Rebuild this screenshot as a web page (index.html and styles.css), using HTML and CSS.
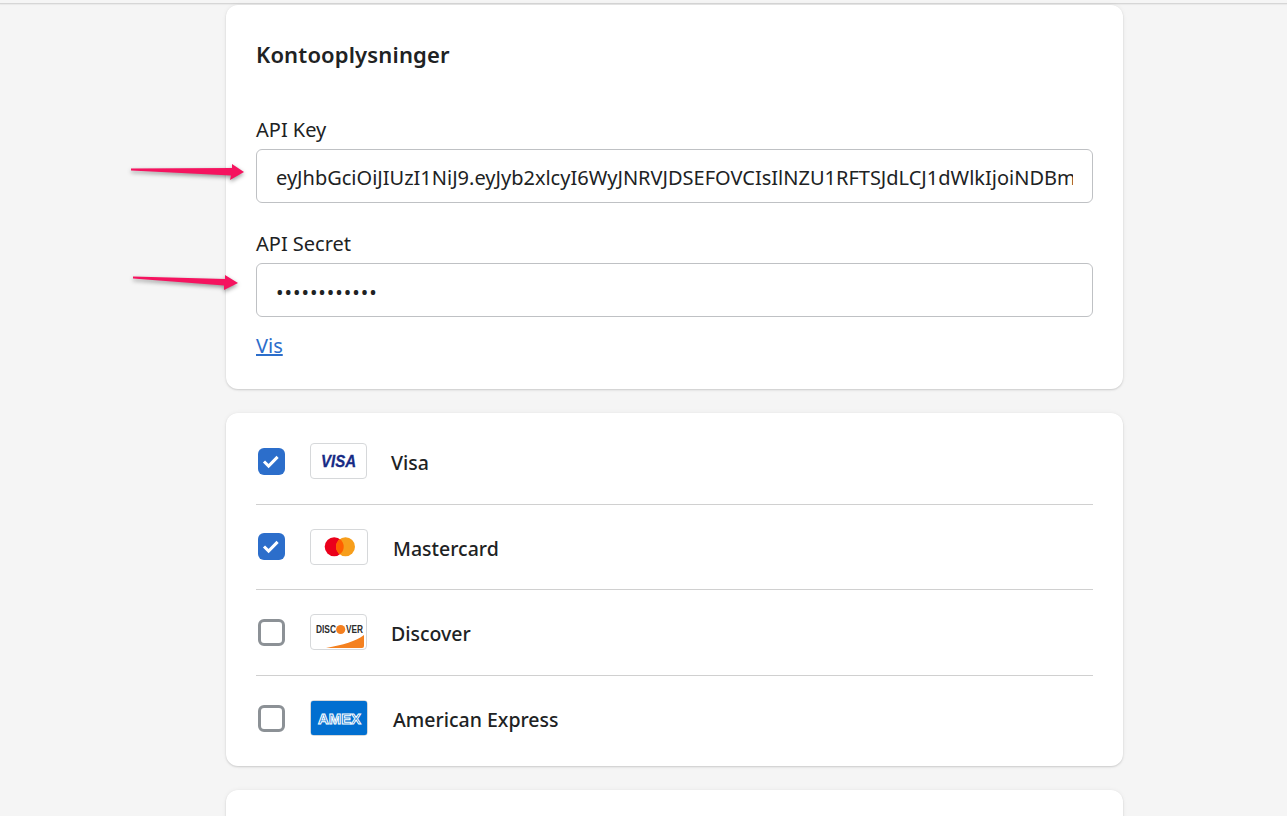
FILE: index.html
```html
<!DOCTYPE html>
<html lang="da">
<head>
<meta charset="utf-8">
<title>Kontooplysninger</title>
<link rel="stylesheet" href="styles.css">
</head>
<body>
<div class="topline"></div>
<main class="page">
  <section class="card account">
    <h2 class="title">Kontooplysninger</h2>
    <div class="field">
      <label class="label" for="key">API Key</label>
      <input class="input" id="key" type="text" readonly value="eyJhbGciOiJIUzI1NiJ9.eyJyb2xlcyI6WyJNRVJDSEFOVCIsIlNZU1RFTSJdLCJ1dWlkIjoiNDBmNjE2MzQ">
    </div>
    <div class="field second">
      <label class="label" for="secret">API Secret</label>
      <input class="input secret" id="secret" type="password" readonly value="abcdefghijkl">
    </div>
    <a class="link" href="#">Vis</a>
  </section>

  <section class="card methods">
    <div class="row">
      <span class="check on"><svg viewBox="0 0 27 27" width="27" height="27"><path d="M6 13.5l4.6 4.6 9-9.2" fill="none" stroke="#fff" stroke-width="3"/></svg></span>
      <span class="logo">
        <svg viewBox="0 0 55 34" width="55" height="34"><text x="10" y="23" textLength="35" lengthAdjust="spacingAndGlyphs" class="visa">VISA</text></svg>
      </span>
      <span class="name">Visa</span>
    </div>
    <div class="row">
      <span class="check on"><svg viewBox="0 0 27 27" width="27" height="27"><path d="M6 13.5l4.6 4.6 9-9.2" fill="none" stroke="#fff" stroke-width="3"/></svg></span>
      <span class="logo wide">
        <svg viewBox="0 0 56 34" width="56" height="34"><circle cx="23.2" cy="16.7" r="9.5" fill="#eb001b"/><circle cx="34.5" cy="16.7" r="9.5" fill="#f79e1b"/><path d="M28.85 9.06a9.5 9.5 0 0 1 0 15.28a9.5 9.5 0 0 1 0-15.28z" fill="#ff5f00"/></svg>
      </span>
      <span class="name">Mastercard</span>
    </div>
    <div class="row">
      <span class="check"></span>
      <span class="logo">
        <svg viewBox="0 0 55 34" width="55" height="34"><text x="5" y="18" textLength="20" lengthAdjust="spacingAndGlyphs" class="discover">DISC</text><circle cx="29.7" cy="14.5" r="4.6" fill="#f47f1f"/><text x="35" y="18" textLength="17" lengthAdjust="spacingAndGlyphs" class="discover">VER</text><path d="M15 33C32 30 45 26 53 20V31a2 2 0 0 1-2 2z" fill="#f48120"/></svg>
      </span>
      <span class="name">Discover</span>
    </div>
    <div class="row">
      <span class="check"></span>
      <span class="logo wide">
        <svg viewBox="0 0 56 34" width="56" height="34"><rect width="56" height="34" rx="2" fill="#016fd0"/><text x="7" y="22.5" textLength="43" lengthAdjust="spacingAndGlyphs" class="amex">AMEX</text></svg>
      </span>
      <span class="name">American Express</span>
    </div>
  </section>

  <section class="card stub"></section>
</main>

<svg class="arrow arrow-key" viewBox="0 0 120 24" width="120" height="24"><path d="M0 8.5L101 8L101 4L113 12L99 20L100 15.5L0 10.5Z" fill="#f5135f"/></svg>
<svg class="arrow arrow-secret" viewBox="0 0 110 24" width="110" height="24"><path d="M0 5.5L92 8L92 4L105 12L91 19L91 14.5L0 7.5Z" fill="#f5135f"/></svg>
</body>
</html>
```
FILE: styles.css
```css
* { box-sizing: border-box; }
html, body { height: 100%; }
html { overflow: hidden; }
body {
  margin: 0;
  background: #f5f5f5;
  color: #202223;
  font-family: "Noto Sans", "Open Sans", "Liberation Sans", sans-serif;
  position: relative;
  overflow: hidden;
}
.topline {
  height: 4px;
  background: #f5f5f5;
  border-bottom: 1px solid #d6d6d6;
  box-shadow: 0 1px 1px rgba(0, 0, 0, 0.05);
}
.page {
  width: 897px;
  margin: 1px 0 0 226px;
  display: flex;
  flex-direction: column;
  gap: 24px;
}
.card {
  background: #fff;
  border-radius: 12px;
  box-shadow: 0 0 5px rgba(23, 24, 24, 0.05), 0 1px 2px rgba(0, 0, 0, 0.15);
}
.account { height: 384px; padding: 29px 30px 0; }
.title {
  margin: 0;
  font-size: 22px;
  line-height: 40px;
  font-weight: 600;
  letter-spacing: 0.15px;
}
.field { margin-top: 42px; }
.field.second { margin-top: 27px; }
.label {
  display: block;
  font-size: 20px;
  line-height: 30px;
  height: 30px;
  margin: -1px 0 4px;
}
.input {
  display: block;
  width: 100%;
  height: 54px;
  padding: 2px 19px 0;
  border: 1px solid #bfc1c4;
  border-radius: 6px;
  background: #fff;
  color: #202223;
  font: inherit;
  font-size: 20px;
  outline: none;
}
.secret { letter-spacing: 0.95px; padding-top: 4px; }
.link {
  display: inline-block;
  margin-top: 14px;
  color: #2c6ecb;
  font-size: 20px;
  line-height: 30px;
  text-decoration: underline;
}
.methods { height: 353px; padding: 6px 30px 0; display: flex; flex-direction: column; }
.row {
  flex: none;
  height: 85px;
  display: flex;
  align-items: center;
  padding-left: 2px;
  border-bottom: 1px solid #d0d0d0;
}
.row:nth-child(odd) { height: 86px; }
.row:last-child { border-bottom: 0; }
.check {
  width: 27px;
  height: 27px;
  flex: none;
  border-radius: 6px;
  border: 3px solid #8c9196;
  background: #fff;
  margin: 0 25px 1px 0;
}
.check.on { border: 0; background: #2c6ecb; }
.check svg { display: block; }
.logo {
  width: 57px;
  height: 36px;
  flex: none;
  border: 1px solid #d6d8da;
  border-radius: 4px;
  background: #fff;
  margin: 0 24px 1px 0;
}
.logo svg { display: block; overflow: visible; }
.logo.wide { width: 58px; margin-right: 25px; }
.name { font-size: 19.5px; font-weight: 500; margin-top: 2px; }
.visa {
  font-family: "Liberation Sans", sans-serif;
  font-size: 16px;
  font-weight: 700;
  font-style: italic;
  fill: #172b85;
  stroke: #172b85;
  stroke-width: 0.3;
}
.discover {
  font-family: "Liberation Sans", sans-serif;
  font-size: 10.5px;
  font-weight: 700;
  fill: #2c2c2c;
}
.amex {
  font-family: "Liberation Sans", sans-serif;
  font-size: 14.5px;
  font-weight: 700;
  fill: #016fd0;
  stroke: #fff;
  stroke-width: 1;
}
.stub { height: 120px; }
.arrow { position: absolute; overflow: visible; filter: drop-shadow(0 2px 2px rgba(0, 0, 0, 0.4)); }
.arrow-key { left: 131px; top: 160px; }
.arrow-secret { left: 133px; top: 271px; }
```
